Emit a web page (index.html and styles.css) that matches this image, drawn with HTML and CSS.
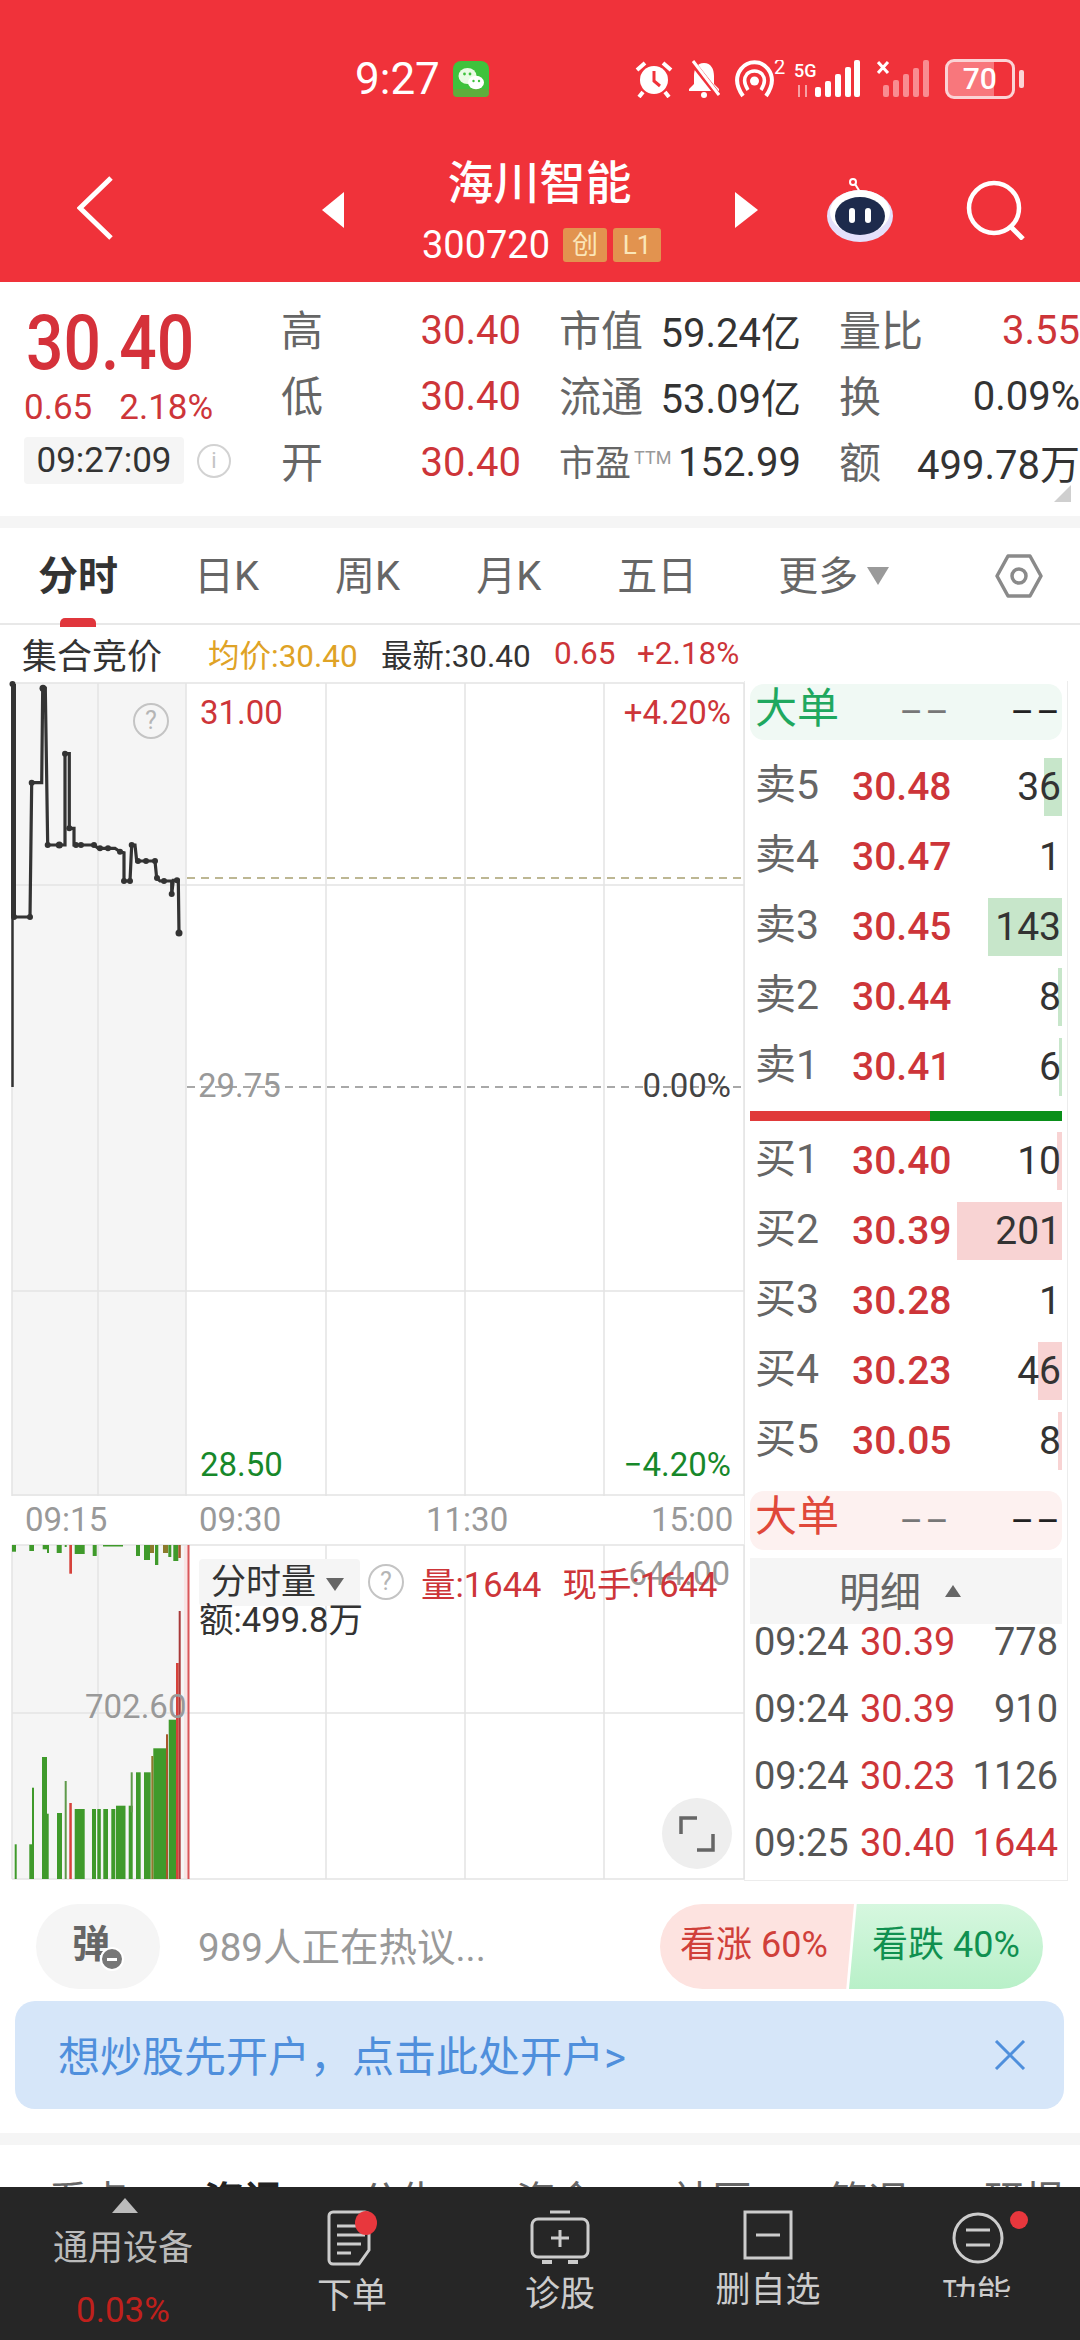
FILE: index.html
```html
<!DOCTYPE html>
<html>
<head>
    <meta charset="utf-8">
    <title>海川智能 300720</title>
    <link rel="stylesheet" href="styles.css">
</head>
<body>
<div class="page">

    <header class="top">
        <div class="status">
            <span class="clock">9:27</span>
            <svg class="wechat" width="36" height="36" viewBox="0 0 36 36">
                <rect width="36" height="36" rx="8" fill="#3fc23c"/>
                <rect y="28" width="36" height="8" rx="4" fill="#5fae3c"/>
                <ellipse cx="14.5" cy="15" rx="9" ry="8" fill="#e9fbe4"/>
                <ellipse cx="23" cy="21.5" rx="8" ry="6.8" fill="#ffffff"/>
                <circle cx="11.5" cy="13" r="1.4" fill="#3fc23c"/>
                <circle cx="17" cy="13" r="1.4" fill="#3fc23c"/>
                <circle cx="20.5" cy="20" r="1.2" fill="#3fc23c"/>
                <circle cx="26" cy="20" r="1.2" fill="#3fc23c"/>
            </svg>
            <div class="status-icons">
                <svg width="40" height="38" viewBox="0 0 40 38">
                    <circle cx="20" cy="20" r="14" fill="#fff"/>
                    <path d="M20 11v10l6 5" fill="none" stroke="#f0323a" stroke-width="3"/>
                    <path d="M3 10l8-7M37 10l-8-7M9 32l-4 5M31 32l4 5" stroke="#fff" stroke-width="4" fill="none"/>
                </svg>
                <svg width="32" height="38" viewBox="0 0 32 38">
                    <path d="M16 3c-7 0-10 6-10 13v8l-5 5v2h30v-2l-5-5v-8c0-7-3-13-10-13z" fill="#fff"/>
                    <circle cx="16" cy="35" r="3" fill="#fff"/>
                    <path d="M4 2l26 33" stroke="#f0323a" stroke-width="6"/>
                    <path d="M5 1l26 34" stroke="#fff" stroke-width="3"/>
                </svg>
                <svg class="hotspot" width="52" height="38" viewBox="0 0 52 38">
                    <path d="M9 36C2 26 1 17 7 9c7-9 20-9 27 0 6 8 5 17-2 27" fill="none" stroke="#fff" stroke-width="4"/>
                    <path d="M14 30c-4-6-5-11-1-16 4-4 11-4 15 0 4 5 3 10-1 16" fill="none" stroke="#fff" stroke-width="3.5"/>
                    <circle cx="20.5" cy="21" r="4.5" fill="#fff"/>
                    <text class="status-mini" x="40" y="14">2</text>
                </svg>
                <svg class="signal" width="68" height="38" viewBox="0 0 68 38">
                    <text class="status-tiny" x="0" y="17">5G</text>
                    <path d="M5 25v12M12 25v12" stroke="#f7a0a4" stroke-width="2"/>
                    <g fill="#fff">
                        <rect x="21" y="27" width="6" height="10" rx="2"/>
                        <rect x="31" y="21" width="6" height="16" rx="2"/>
                        <rect x="41" y="14" width="6" height="23" rx="2"/>
                        <rect x="51" y="7" width="6" height="30" rx="2"/>
                        <rect x="60" y="0" width="6" height="37" rx="2"/>
                    </g>
                </svg>
                <svg class="signal-off" width="54" height="38" viewBox="0 0 54 38">
                    <path d="M1 2l10 11M11 2L1 13" stroke="#fff" stroke-width="3"/>
                    <g fill="#f98c91">
                        <rect x="6" y="25" width="6" height="12" rx="2"/>
                        <rect x="16" y="20" width="6" height="17" rx="2"/>
                        <rect x="26" y="14" width="6" height="23" rx="2"/>
                        <rect x="36" y="8" width="6" height="29" rx="2"/>
                        <rect x="46" y="0" width="6" height="37" rx="2"/>
                    </g>
                </svg>
                <div class="battery">
                    <div class="battery-body"><span class="battery-num">70</span></div>
                    <div class="battery-tip"></div>
                </div>
            </div>
        </div>

        <nav class="nav">
            <svg class="back" width="36" height="64" viewBox="0 0 36 64">
                <path d="M34 2L3 32l31 30" fill="none" stroke="#fff" stroke-width="5"/>
            </svg>
            <div class="tri-left"></div>
            <div class="stock-name">
                <div class="stock-title">海川智能</div>
                <div class="stock-code">
                    <span>300720</span>
                    <span class="tag">创</span>
                    <span class="tag tag-wide">L1</span>
                </div>
            </div>
            <div class="tri-right"></div>
            <svg class="robot" width="68" height="64" viewBox="0 0 68 64">
                <circle cx="27" cy="4" r="3" fill="none" stroke="#fff" stroke-width="2"/>
                <path d="M29 6l5 8" stroke="#fff" stroke-width="2"/>
                <ellipse cx="34" cy="38" rx="33" ry="26" fill="#e4e0fb"/>
                <ellipse cx="34" cy="34" rx="30" ry="22" fill="#fff"/>
                <ellipse cx="34" cy="38" rx="25" ry="19" fill="#1d2a4c"/>
                <rect x="23" y="30" width="6" height="15" rx="3" fill="#fff"/>
                <rect x="39" y="30" width="6" height="15" rx="3" fill="#fff"/>
            </svg>
            <svg class="search" width="60" height="60" viewBox="0 0 60 60">
                <circle cx="28" cy="28" r="25" fill="none" stroke="#fff" stroke-width="4.5"/>
                <path d="M44 46l13 13" stroke="#fff" stroke-width="5"/>
            </svg>
        </nav>
    </header>

    <section class="quote">
        <div class="quote-main">
            <div class="last-price">30.40</div>
            <div class="last-change"><span>0.65</span><span>2.18%</span></div>
            <div class="last-time">
                <span class="time-chip">09:27:09</span>
                <span class="info-dot">i</span>
            </div>
        </div>
        <div class="stats">
            <div class="stat"><span class="stat-label">高</span><span class="red">30.40</span></div>
            <div class="stat"><span class="stat-label">市值</span><span>59.24亿</span></div>
            <div class="stat stat-last"><span class="stat-label">量比</span><span class="red">3.55</span></div>
            <div class="stat"><span class="stat-label">低</span><span class="red">30.40</span></div>
            <div class="stat"><span class="stat-label">流通</span><span>53.09亿</span></div>
            <div class="stat stat-last"><span class="stat-label">换</span><span>0.09%</span></div>
            <div class="stat"><span class="stat-label">开</span><span class="red">30.40</span></div>
            <div class="stat"><span class="stat-label stat-small">市盈<sup>TTM</sup></span><span>152.99</span></div>
            <div class="stat stat-last"><span class="stat-label">额</span><span>499.78万</span></div>
        </div>
        <div class="corner"></div>
    </section>

    <div class="band"></div>

    <div class="tabs">
        <span class="tab active">分时</span>
        <span class="tab">日K</span>
        <span class="tab">周K</span>
        <span class="tab">月K</span>
        <span class="tab">五日</span>
        <span class="tab tab-more">更多<i class="tab-arrow"></i></span>
        <svg class="tab-gear" width="48" height="46" viewBox="0 0 48 46">
            <path d="M13 3h22l11 20-11 20H13L2 23z" fill="none" stroke="#8a8a8a" stroke-width="3.5" stroke-linejoin="round"/>
            <circle cx="24" cy="23" r="7" fill="none" stroke="#8a8a8a" stroke-width="3.5"/>
        </svg>
    </div>

    <div class="summary">
        <span class="summary-title">集合竞价</span>
        <span class="summary-avg">均价:30.40</span>
        <span class="summary-new">最新:30.40</span>
        <span class="red summary-diff">0.65</span>
        <span class="red summary-pct">+2.18%</span>
    </div>

    <section class="market">
        <div class="charts">
            <div class="price-chart">
                <svg class="plot" width="732" height="815" viewBox="12 680 732 815">
                    <rect x="12" y="682" width="174" height="813" fill="#f5f5f5"/>
                    <g stroke="#e3e3e3" stroke-width="1.5">
                        <path d="M12 682H744M12 884H744M12 1290H744M12 1494H744"/>
                        <path d="M12 682V1495M98 682V1495M186 682V1495M326 682V1495M465 682V1495M604 682V1495M744 682V1495"/>
                    </g>
                    <path d="M187 877H744" stroke="#bdb793" stroke-width="2" stroke-dasharray="8 6"/>
                    <path d="M187 1086H744" stroke="#a8a8a8" stroke-width="2" stroke-dasharray="8 6"/>
                    <path d="M12.5 880V1086" stroke="#333" stroke-width="2.5"/>
                    <path d="M13.5 683V916" stroke="#333" stroke-width="5"/>
                    <polyline class="price-line" points="13,916 30,916 31.7,781.7 41.7,781.7 42.7,687.3 45.3,687.3 47.7,844 59.3,844 65,844 65,752.7 69.3,752.7 69.3,827.3 74,827.3 74,844 94,844 98.3,847.3 115,847.3 120,850.7 124,851.7 124,880 130,880 131.7,844 135,844 136.7,860 155,860 156.7,877.3 160,880 171.7,880 171.7,893.3 173.3,879.3 178.3,879.3 179,932"/>
                    <g fill="#333">
                        <circle cx="12.5" cy="683" r="3"/><circle cx="14" cy="916" r="3"/><circle cx="30" cy="916" r="3"/>
                        <circle cx="31.7" cy="781.7" r="3"/><circle cx="43" cy="687.3" r="3.5"/><circle cx="47.7" cy="844" r="3"/>
                        <circle cx="59.3" cy="844" r="3.5"/><circle cx="65" cy="752.7" r="3"/><circle cx="69.3" cy="827.3" r="3"/>
                        <circle cx="76" cy="844" r="3"/><circle cx="81" cy="844" r="3"/><circle cx="94" cy="844" r="3"/>
                        <circle cx="100" cy="847.3" r="3"/><circle cx="108" cy="847.3" r="3"/><circle cx="120" cy="850.7" r="3"/>
                        <circle cx="124" cy="880" r="3"/><circle cx="130" cy="880" r="3"/><circle cx="131.7" cy="844" r="3"/>
                        <circle cx="138" cy="860" r="3"/><circle cx="146" cy="860" r="3"/><circle cx="155" cy="860" r="3"/>
                        <circle cx="157" cy="877" r="3"/><circle cx="164" cy="880" r="3"/><circle cx="171.7" cy="893" r="3"/>
                        <circle cx="177" cy="879.3" r="3"/><circle cx="179" cy="932" r="3.5"/>
                    </g>
                </svg>
                <span class="help-dot help-auction">?</span>
                <span class="axis red axis-hi">31.00</span>
                <span class="axis red axis-hi-pct">+4.20%</span>
                <span class="axis muted axis-mid">29.75</span>
                <span class="axis axis-mid-pct">0.00%</span>
                <span class="axis green axis-lo">28.50</span>
                <span class="axis green axis-lo-pct">−4.20%</span>
            </div>

            <div class="time-axis">
                <span class="t1">09:15</span>
                <span class="t2">09:30</span>
                <span class="t3">11:30</span>
                <span class="t4">15:00</span>
            </div>

            <div class="volume-chart">
                <svg class="plot" width="732" height="336" viewBox="12 1544 732 336">
                    <rect x="12" y="1544" width="172" height="334" fill="#f5f5f5"/>
                    <rect x="184" y="1544" width="4" height="334" fill="#f9e4e4"/>
                    <g stroke="#e3e3e3" stroke-width="1.5">
                        <path d="M12 1544H744M12 1712H744M12 1878H744"/>
                        <path d="M12 1544V1878M98 1544V1878M326 1544V1878M465 1544V1878M604 1544V1878M744 1544V1878"/>
                    </g>
                    <!-- 成交量柱 -->
                    <g fill="#3f9a2b">
                        <rect x="14.7" y="1843.3" width="2" height="34.7"/>
                        <rect x="29.3" y="1843.3" width="4" height="34.7"/>
                        <rect x="32" y="1786.7" width="2" height="91.3"/>
                        <rect x="42" y="1756" width="5" height="122"/>
                        <rect x="46.7" y="1812.7" width="2" height="65.3"/>
                        <rect x="57" y="1812" width="5" height="66"/>
                        <rect x="64.7" y="1780" width="2" height="98" fill="#5f9a4b"/>
                        <rect x="74.7" y="1808" width="10" height="70"/>
                        <rect x="92" y="1808" width="4" height="70"/>
                        <rect x="97.3" y="1808" width="3.5" height="70"/>
                        <rect x="103.3" y="1808" width="4.7" height="70"/>
                        <rect x="111.3" y="1808" width="4" height="70"/>
                        <rect x="116" y="1804.7" width="9.5" height="73.3"/>
                        <rect x="128.7" y="1804.7" width="4" height="73.3"/>
                        <rect x="130.7" y="1771.3" width="2" height="40" fill="#5f9a4b"/>
                        <rect x="136" y="1771.3" width="4.7" height="106.7"/>
                        <rect x="144" y="1771.3" width="6.7" height="106.7"/>
                        <rect x="153.3" y="1747.3" width="12.7" height="130.7"/>
                        <rect x="168.7" y="1718.7" width="7.3" height="159.3"/>
                        <rect x="12" y="1544" width="4" height="6.7"/>
                        <rect x="29.3" y="1544" width="4.7" height="6"/>
                        <rect x="42.7" y="1544" width="5" height="4.3"/>
                        <rect x="47" y="1544" width="2" height="8"/>
                        <rect x="56.7" y="1544" width="5" height="8"/>
                        <rect x="64.7" y="1544" width="2" height="2"/>
                        <rect x="74.7" y="1544" width="10" height="9"/>
                        <rect x="92.7" y="1544" width="4" height="11"/>
                        <rect x="103" y="1544" width="20" height="1.5"/>
                        <rect x="136" y="1544" width="4" height="11"/>
                        <rect x="144" y="1544" width="6" height="15"/>
                        <rect x="155" y="1544" width="3.3" height="20"/>
                        <rect x="168.3" y="1544" width="3" height="12"/>
                        <rect x="173.3" y="1544" width="5" height="16"/>
                    </g>
                    <g fill="#8c7a2c">
                        <rect x="151.3" y="1755" width="2" height="123"/>
                        <rect x="150" y="1544" width="4" height="8"/>
                        <rect x="163" y="1544" width="5" height="8"/>
                    </g>
                    <g fill="#d6423b">
                        <rect x="69.3" y="1802" width="2.5" height="76"/>
                        <rect x="69.3" y="1544" width="2.7" height="28.7"/>
                        <rect x="166" y="1733.3" width="2" height="144.7" fill="#a8552c"/>
                        <rect x="176" y="1662" width="2.7" height="216"/>
                        <rect x="178.7" y="1610" width="2" height="268" fill="#a83a3a"/>
                        <rect x="178.3" y="1544" width="2.5" height="13" fill="#a8552c"/>
                    </g>
                    <path d="M188.5 1544V1878" stroke="#d9575a" stroke-width="2"/>
                </svg>
                <span class="axis muted vol-mid">702.60</span>
                <span class="axis muted vol-max">644.00</span>
                <div class="vol-head">
                    <span class="vol-select">分时量<i class="select-arrow"></i></span>
                    <span class="help-dot">?</span>
                    <span class="red vol-now">量:1644</span>
                    <span class="red vol-hand">现手:1644</span>
                </div>
                <div class="vol-amount">额:499.8万</div>
                <div class="expand">
                    <svg width="36" height="36" viewBox="0 0 36 36">
                        <path d="M2 18V2h16M34 18v16H18" fill="none" stroke="#666" stroke-width="3.5"/>
                    </svg>
                </div>
            </div>
        </div>

        <aside class="book">
            <div class="big-order big-buy"><span class="big-name">大单</span><span class="dash">——</span><span class="dash dash-dark">——</span></div>

            <div class="book-rows">
                <div class="book-row"><i class="vol-bar ask" style="width:18px"></i><span class="book-name">卖5</span><span class="book-price">30.48</span><span class="book-qty">36</span></div>
                <div class="book-row"><span class="book-name">卖4</span><span class="book-price">30.47</span><span class="book-qty">1</span></div>
                <div class="book-row"><i class="vol-bar ask" style="width:74px"></i><span class="book-name">卖3</span><span class="book-price">30.45</span><span class="book-qty">143</span></div>
                <div class="book-row"><i class="vol-bar ask" style="width:4px"></i><span class="book-name">卖2</span><span class="book-price">30.44</span><span class="book-qty">8</span></div>
                <div class="book-row"><i class="vol-bar ask" style="width:3px"></i><span class="book-name">卖1</span><span class="book-price">30.41</span><span class="book-qty">6</span></div>
            </div>

            <div class="book-split"><i class="split-red"></i><i class="split-green"></i></div>

            <div class="book-rows">
                <div class="book-row"><i class="vol-bar bid" style="width:5px"></i><span class="book-name">买1</span><span class="book-price">30.40</span><span class="book-qty">10</span></div>
                <div class="book-row"><i class="vol-bar bid" style="width:105px"></i><span class="book-name">买2</span><span class="book-price">30.39</span><span class="book-qty">201</span></div>
                <div class="book-row"><span class="book-name">买3</span><span class="book-price">30.28</span><span class="book-qty">1</span></div>
                <div class="book-row"><i class="vol-bar bid" style="width:24px"></i><span class="book-name">买4</span><span class="book-price">30.23</span><span class="book-qty">46</span></div>
                <div class="book-row"><i class="vol-bar bid" style="width:4px"></i><span class="book-name">买5</span><span class="book-price">30.05</span><span class="book-qty">8</span></div>
            </div>

            <div class="big-order big-sell"><span class="big-name">大单</span><span class="dash">——</span><span class="dash dash-dark">——</span></div>

            <div class="detail-head"><span>明细</span><i class="detail-arrow"></i></div>
            <div class="trades">
                <div class="trade"><span>09:24</span><span class="red">30.39</span><span class="trade-qty">778</span></div>
                <div class="trade"><span>09:24</span><span class="red">30.39</span><span class="trade-qty">910</span></div>
                <div class="trade"><span>09:24</span><span class="red">30.23</span><span class="trade-qty">1126</span></div>
                <div class="trade"><span>09:25</span><span class="red">30.40</span><span class="trade-qty red">1644</span></div>
            </div>
        </aside>
    </section>

    <section class="talk">
        <div class="danmu">弹<i class="danmu-off"></i></div>
        <div class="talk-text">989人正在热议...</div>
        <div class="vote">
            <span class="vote-up">看涨 60%</span>
            <span class="vote-down">看跌 40%</span>
        </div>
    </section>

    <div class="promo">
        <span>想炒股先开户，点击此处开户&gt;</span>
        <svg width="32" height="30" viewBox="0 0 32 30">
            <path d="M2 1l28 28M30 1L2 29" stroke="#4f8fdc" stroke-width="3"/>
        </svg>
    </div>

    <div class="band band-low"></div>

    <div class="news-tabs">
        <span>看点</span>
        <span class="news-on">资讯</span>
        <span>公告</span>
        <span>资金</span>
        <span>社区</span>
        <span>简况</span>
        <span>研报</span>
    </div>

    <footer class="dock">
        <div class="dock-sector">
            <i class="sector-arrow"></i>
            <div class="sector-name">通用设备</div>
            <div class="sector-pct">0.03%</div>
        </div>
        <div class="dock-item item-order">
            <svg width="54" height="56" viewBox="0 0 54 56">
                <path d="M8 2h32a4 4 0 0 1 4 4v34l-10 14H8a4 4 0 0 1-4-4V6a4 4 0 0 1 4-4z" fill="none" stroke="#ccc" stroke-width="3"/>
                <path d="M12 16h24M12 25h28M12 34h24M12 43h14" stroke="#ccc" stroke-width="3"/>
                <ellipse cx="41" cy="13" rx="11" ry="12" fill="#e8373d"/>
            </svg>
            <span>下单</span>
        </div>
        <div class="dock-item item-check">
            <svg width="60" height="54" viewBox="0 0 60 54">
                <path d="M20 2h20" stroke="#ccc" stroke-width="3"/>
                <rect x="2" y="9" width="56" height="38" rx="6" fill="none" stroke="#ccc" stroke-width="3"/>
                <path d="M12 52h10M38 52h10" stroke="#ccc" stroke-width="4"/>
                <path d="M30 20v17M21 28h18" stroke="#ccc" stroke-width="3"/>
            </svg>
            <span>诊股</span>
        </div>
        <div class="dock-item item-fav">
            <svg width="50" height="50" viewBox="0 0 50 50">
                <rect x="2" y="2" width="46" height="46" fill="none" stroke="#ccc" stroke-width="3"/>
                <path d="M13 25h24" stroke="#ccc" stroke-width="3"/>
            </svg>
            <span>删自选</span>
        </div>
        <div class="dock-item item-more">
            <svg width="80" height="54" viewBox="0 0 80 54">
                <circle cx="27" cy="28" r="24" fill="none" stroke="#ccc" stroke-width="3"/>
                <path d="M15 20h24M15 35h24" stroke="#ccc" stroke-width="3"/>
                <ellipse cx="68" cy="10" rx="9" ry="9" fill="#e8373d"/>
            </svg>
            <span>功能</span>
        </div>
        <div class="dock-smear"></div>
    </footer>

</div>
</body>
</html>
```

FILE: styles.css
```css
* {
    box-sizing: border-box;
}

body {
    margin: 0;
    background-color: #fff;
    font-family: Roboto, "Noto Sans CJK SC", sans-serif;
    color: #333;
}

i {
    font-style: normal;
}

.page {
    position: relative;
    width: 1080px;
    height: 2340px;
    overflow: hidden;
}

.red { color: #cd3539; }
.green { color: #17882a; }
.muted { color: #999; }

/* header */
.top {
    height: 282px;
    background-color: #f0323a;
    color: #fff;
    padding-top: 59px;
}

.status {
    display: flex;
    align-items: center;
    height: 40px;
    padding-left: 355px;
}

.clock {
    font-size: 44px;
    line-height: 40px;
}

.wechat {
    margin-left: 13px;
}

.status-icons {
    display: flex;
    align-items: center;
    gap: 14px;
    margin-left: 145px;
}

.status-mini {
    font-size: 20px;
    fill: #fff;
}

.status-tiny {
    font-size: 18px;
    font-weight: 500;
    fill: #fff;
}

.hotspot { margin-right: -6px; }
.signal-off { margin-left: 1px; }

.battery {
    display: flex;
    align-items: center;
    gap: 4px;
}

.battery-body {
    width: 70px;
    height: 40px;
    border: 3px solid #fbd3d5;
    border-radius: 9px;
    background: linear-gradient(90deg, #f8777c 72%, transparent 72%);
    text-align: center;
}

.battery-num {
    font-size: 30px;
    line-height: 34px;
    font-weight: 500;
    display: block;
}

.battery-tip {
    width: 5px;
    height: 18px;
    background-color: #fbd3d5;
    border-radius: 2px;
}

.nav {
    display: flex;
    align-items: flex-start;
    padding-left: 77px;
    margin-top: 61px;
}

.back {
    margin-top: 16px;
}

.tri-left,
.tri-right {
    width: 0;
    height: 0;
    margin-top: 32px;
    border-top: 18px solid transparent;
    border-bottom: 18px solid transparent;
}

.tri-left {
    margin-left: 209px;
    border-right: 22px solid #fff;
}

.tri-right {
    border-left: 23px solid #fff;
}

.stock-name {
    width: 391px;
    text-align: center;
}

.stock-title {
    font-size: 46px;
    line-height: 46px;
    font-weight: 500;
}

.stock-code {
    display: flex;
    justify-content: center;
    align-items: center;
    gap: 6px;
    margin-top: 22px;
    font-size: 38px;
    line-height: 34px;
    padding-left: 4px;
}

.stock-code > span:first-child {
    margin-right: 7px;
}

.tag {
    width: 44px;
    height: 34px;
    background-color: #e2934f;
    border-radius: 3px;
    color: #fbe6b8;
    font-size: 26px;
    line-height: 34px;
    text-align: center;
}

.tag-wide { width: 48px; }

.robot {
    margin-left: 68px;
    margin-top: 18px;
}

.search {
    margin-left: 72px;
    margin-top: 20px;
}

/* quote */
.quote {
    position: relative;
    display: flex;
    height: 234px;
}

.quote-main {
    width: 281px;
    padding: 24px 0 0 24px;
}

.last-price {
    font-size: 66px;
    line-height: 76px;
    font-weight: 500;
    color: #d5313a;
    margin-left: 2px;
    transform: scaleY(1.14);
}

.last-change {
    display: flex;
    gap: 27px;
    margin-top: 6px;
    font-size: 35px;
    line-height: 40px;
    color: #cd3539;
}

.last-time {
    display: flex;
    align-items: center;
    margin-top: 9px;
}

.time-chip {
    width: 160px;
    height: 47px;
    background-color: #f5f5f5;
    border-radius: 4px;
    font-size: 35px;
    line-height: 47px;
    text-align: center;
}

.info-dot {
    width: 34px;
    height: 34px;
    margin-left: 13px;
    border: 2.5px solid #d2d2d2;
    border-radius: 50%;
    color: #c4c4c4;
    font-size: 22px;
    line-height: 29px;
    text-align: center;
}

.stats {
    display: grid;
    grid-template-columns: 278px 280px 241px;
    grid-auto-rows: 66px;
    padding-top: 15px;
    font-size: 40px;
}

.stat {
    display: flex;
    justify-content: space-between;
    align-items: center;
    padding-right: 38px;
    white-space: nowrap;
}

.stat-last {
    padding-right: 0;
}

.stat-label {
    color: #666;
    font-size: 42px;
    margin-bottom: 5px;
}

.stat-small {
    font-size: 36px;
}

.stat-small sup {
    font-size: 18px;
    color: #999;
    vertical-align: 12px;
    line-height: 0;
    margin-left: 3px;
}

.corner {
    position: absolute;
    right: 9px;
    bottom: 14px;
    width: 0;
    height: 0;
    border-left: 17px solid transparent;
    border-bottom: 17px solid #cfcfcf;
}

.band {
    height: 12px;
    background-color: #f5f5f5;
}

/* tabs */
.tabs {
    display: flex;
    align-items: center;
    gap: 76px;
    height: 97px;
    padding: 0 0 6px 38px;
    border-bottom: 2px solid #e8e8e8;
    font-size: 40px;
    color: #666;
    position: relative;
}

.tab {
    position: relative;
    white-space: nowrap;
}

.tab.active {
    font-weight: 700;
    color: #333;
}

.tab.active::after {
    content: "";
    position: absolute;
    left: 22px;
    bottom: -25px;
    width: 36px;
    height: 9px;
    border-radius: 5px 5px 0 0;
    background-color: #e0363c;
}

.tab-more {
    margin-left: 5px;
}

.tab-arrow {
    display: inline-block;
    margin-left: 9px;
    vertical-align: 5px;
    border-left: 11px solid transparent;
    border-right: 11px solid transparent;
    border-top: 18px solid #9a9a9a;
}

.tab-gear {
    position: absolute;
    left: 995px;
    top: 25px;
}

/* summary line */
.summary {
    display: flex;
    align-items: center;
    height: 56px;
    font-size: 31.5px;
    white-space: nowrap;
}

.summary-title {
    margin-left: 22px;
    font-size: 35px;
    width: 186px;
}

.summary-avg {
    color: #dfa326;
    width: 173px;
}

.summary-new {
    width: 173px;
}

.summary-diff {
    width: 83px;
}

/* charts + order book */
.market {
    display: flex;
    height: 1200px;
    padding-left: 12px;
}

.charts {
    width: 732px;
}

.price-chart {
    position: relative;
    height: 815px;
}

.plot {
    display: block;
    overflow: visible;
}

.price-line {
    fill: none;
    stroke: #333;
    stroke-width: 3.2;
}

.help-dot {
    display: inline-block;
    width: 36px;
    height: 36px;
    border: 2.5px solid #c4c4c4;
    border-radius: 50%;
    color: #b5b5b5;
    font-size: 25px;
    line-height: 31px;
    text-align: center;
}

.help-auction {
    position: absolute;
    left: 121px;
    top: 22px;
}

.axis {
    position: absolute;
    font-size: 33px;
    line-height: 38px;
    white-space: nowrap;
}

.axis-hi { left: 188px; top: 13px; }
.axis-hi-pct { right: 13px; top: 13px; }
.axis-mid { left: 186px; top: 386px; }
.axis-mid-pct { right: 13px; top: 386px; color: #444; }
.axis-lo { left: 188px; top: 765px; }
.axis-lo-pct { right: 13px; top: 765px; }

.time-axis {
    position: relative;
    height: 49px;
    font-size: 33px;
    line-height: 48px;
    color: #999;
}

.time-axis span {
    position: absolute;
    top: 0;
}

.time-axis .t1 { left: 13px; }
.time-axis .t2 { left: 187px; }
.time-axis .t3 { left: 414px; }
.time-axis .t4 { left: 639px; }

.volume-chart {
    position: relative;
    height: 336px;
}

.vol-mid { left: 73px; top: 143px; }
.vol-max { right: 14px; top: 10px; }

.vol-head {
    position: absolute;
    left: 187px;
    top: 12px;
    display: flex;
    align-items: center;
    font-size: 34.5px;
    white-space: nowrap;
}

.vol-select {
    width: 161px;
    height: 47px;
    padding-left: 12px;
    background-color: #f5f5f5;
    border-radius: 4px;
    font-size: 35px;
    line-height: 47px;
}

.select-arrow {
    display: inline-block;
    margin-left: 10px;
    vertical-align: 3px;
    border-left: 9px solid transparent;
    border-right: 9px solid transparent;
    border-top: 13px solid #666;
}

.vol-head .help-dot {
    margin-left: 8px;
}

.vol-now {
    margin-left: 17px;
}

.vol-hand {
    margin-left: 21px;
}

.vol-amount {
    position: absolute;
    left: 187px;
    top: 57px;
    font-size: 34.5px;
    line-height: 36px;
}

.expand {
    position: absolute;
    left: 650px;
    top: 253px;
    display: flex;
    align-items: center;
    justify-content: center;
    width: 70px;
    height: 71px;
    border-radius: 50%;
    background-color: #eee;
}

.book {
    width: 324px;
    height: 1200px;
    padding: 3px 5px 0;
    border-left: 1px solid #ececec;
    border-right: 1px solid #ececec;
    border-bottom: 1px solid #ececec;
}

.big-order {
    display: flex;
    align-items: center;
    height: 56px;
    padding-left: 5px;
    border-radius: 14px;
    font-size: 42px;
    line-height: 48px;
    color: #555;
}

.big-buy {
    background-color: #f0f9f4;
}

.big-buy .big-name {
    color: #1fa85f;
}

.big-sell {
    height: 59px;
    margin-top: 15px;
    background-color: #fdf1f0;
}

.big-sell .big-name {
    color: #e0483a;
}

.big-name {
    flex: none;
    width: 146px;
    margin-top: -7px;
}

.dash {
    flex: none;
    width: 111px;
    font-size: 26px;
    font-weight: 700;
    letter-spacing: 6px;
    color: #777;
    white-space: nowrap;
}

.dash-dark {
    width: 50px;
    color: #222;
}

.book-rows {
    padding-top: 12px;
}

.book-row {
    position: relative;
    display: flex;
    align-items: center;
    height: 70px;
    padding: 0 1px 0 5px;
    font-size: 39px;
}

.book-name {
    position: relative;
    width: 97px;
    margin-bottom: 5px;
    color: #666;
    font-size: 41px;
    line-height: 48px;
}

.book-price {
    position: relative;
    color: #cd3539;
    font-weight: 500;
}

.book-qty {
    position: relative;
    margin-left: auto;
}

.vol-bar {
    position: absolute;
    right: 0;
    top: 6px;
    bottom: 6px;
}

.vol-bar.ask { background-color: #c7e6ca; }
.vol-bar.bid { background-color: #f8d3d3; }

.book-split {
    display: flex;
    height: 10px;
    margin-top: 9px;
    margin-bottom: -7px;
}

.split-red {
    width: 180px;
    background-color: #e03a3a;
}

.split-green {
    flex: 1;
    background-color: #0a8f1a;
}

.book-split + .book-rows {
    padding-top: 12px;
}

.detail-head {
    display: flex;
    align-items: center;
    justify-content: center;
    height: 66px;
    margin-top: 8px;
    padding-right: 12px;
    background-color: #f5f5f5;
    font-size: 41px;
    color: #666;
}

.detail-head span {
    margin-bottom: 5px;
}

.detail-arrow {
    margin-left: 24px;
    border-left: 8px solid transparent;
    border-right: 8px solid transparent;
    border-bottom: 12px solid #666;
}

.trades {
    display: flex;
    flex-direction: column;
    justify-content: flex-end;
    height: 256px;
    padding-bottom: 4px;
}

.trade {
    display: flex;
    align-items: center;
    flex: none;
    height: 67px;
    padding: 0 4px;
    font-size: 38px;
    color: #555;
}

.trade > span:first-child {
    width: 106px;
}

.trade-qty {
    margin-left: auto;
}

/* chat + vote */
.talk {
    display: flex;
    align-items: center;
    height: 85px;
    margin-top: 23px;
    padding-left: 36px;
}

.danmu {
    position: relative;
    width: 124px;
    height: 85px;
    padding-left: 36px;
    background-color: #f5f5f5;
    border-radius: 43px;
    font-size: 38px;
    font-weight: 700;
    line-height: 80px;
    color: #666;
}

.danmu-off {
    position: absolute;
    left: 64px;
    top: 43px;
    width: 24px;
    height: 24px;
    border-radius: 50%;
    border: 2px solid #fff;
    background: linear-gradient(#fff, #fff) center / 10px 3px no-repeat #777;
}

.talk-text {
    margin-left: 38px;
    margin-bottom: 5px;
    font-size: 38.5px;
    color: #999;
}

.vote {
    display: flex;
    margin-left: auto;
    margin-right: 37px;
    width: 383px;
    height: 85px;
    font-size: 36px;
    line-height: 82px;
    white-space: nowrap;
}

.vote-up {
    width: 194px;
    padding-left: 20px;
    color: #d0403a;
    border-radius: 43px 0 0 43px;
    background-color: #fde3e0;
    clip-path: polygon(0 0, 100% 0, 96% 100%, 0 100%);
}

.vote-down {
    width: 194px;
    margin-left: -5px;
    padding-left: 23px;
    color: #109050;
    border-radius: 0 43px 43px 0;
    background: linear-gradient(#d6f7df, #b8f0c8);
    clip-path: polygon(4% 0, 100% 0, 100% 100%, 0 100%);
}

.promo {
    display: flex;
    align-items: center;
    justify-content: space-between;
    height: 108px;
    margin: 12px 16px 0 15px;
    padding: 0 38px 0 43px;
    background-color: #d6e6f9;
    border-radius: 20px;
    font-size: 42px;
    color: #4f8fdc;
}

.promo span {
    margin-bottom: 4px;
}

.band-low {
    margin-top: 24px;
}

.news-tabs {
    display: flex;
    gap: 76px;
    padding: 34px 0 0 48px;
    font-size: 40px;
    line-height: 46px;
    color: #666;
    white-space: nowrap;
}

.news-on {
    font-weight: 700;
    color: #222;
}

/* bottom dock */
.dock {
    position: absolute;
    left: 0;
    right: 0;
    bottom: 0;
    height: 153px;
    background-color: #262626;
    color: #ccc;
    display: flex;
}

.dock-sector {
    width: 250px;
    padding-left: 53px;
    font-size: 35px;
    color: #bbb;
}

.sector-arrow {
    display: block;
    width: 0;
    margin: 11px 0 0 59px;
    border-left: 13px solid transparent;
    border-right: 13px solid transparent;
    border-bottom: 15px solid #bbb;
}

.sector-name {
    margin-top: 15px;
    line-height: 42px;
}

.sector-pct {
    margin: 23px 0 0 23px;
    line-height: 36px;
    color: #c0201c;
}

.dock-item {
    display: flex;
    flex-direction: column;
    align-items: center;
    padding-top: 23px;
    font-size: 35px;
    line-height: 40px;
    position: absolute;
    white-space: nowrap;
}

.dock-item span {
    margin-top: 11px;
}

.item-order { left: 318px; width: 68px; }
.item-check { left: 525px; width: 70px; }
.item-fav { left: 715px; width: 106px; }
.item-more { left: 942px; width: 69px; }

.item-more svg {
    margin-left: 28px;
    flex: none;
}

.dock-smear {
    position: absolute;
    left: 854px;
    right: 0;
    bottom: 10px;
    height: 33px;
    background-color: #262626;
}
```
